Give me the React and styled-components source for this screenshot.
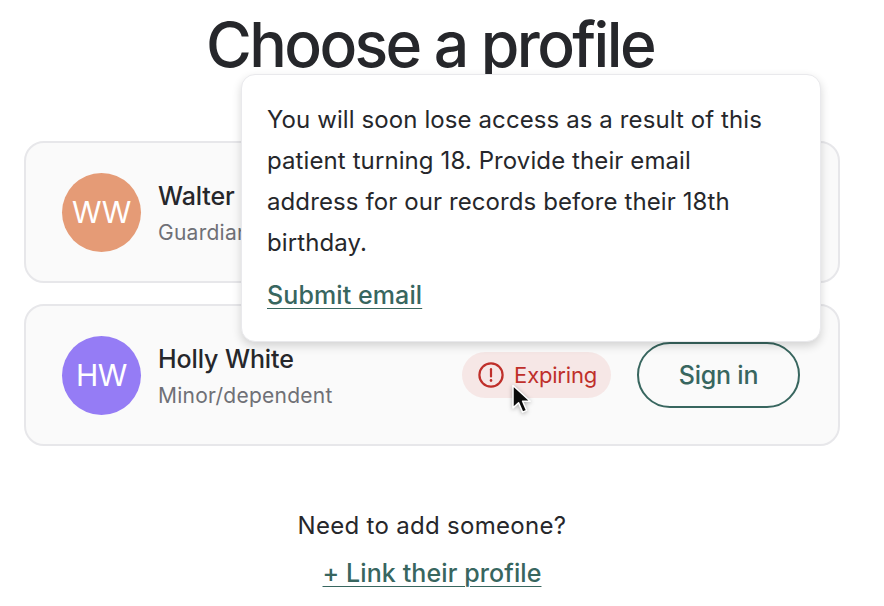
import styled, { createGlobalStyle } from 'styled-components';

const GlobalStyle = createGlobalStyle`
  html, body {
    margin: 0;
    padding: 0;
    background: #fff;
    overflow: hidden;
  }
  body {
    font-family: 'Inter', 'Liberation Sans', sans-serif;
    color: #26272b;
  }
`;

const profiles = [
  { initials: 'WW', name: 'Walter White', role: 'Guardian', color: '#e59b76' },
  { initials: 'HW', name: 'Holly White', role: 'Minor/dependent', color: '#957cf5', expiring: true },
];

function AlertIcon() {
  return (
    <svg width="28" height="28" viewBox="0 0 28 28" fill="none" stroke="#bf2f2a" strokeWidth="2.2" strokeLinecap="round">
      <circle cx="14" cy="14" r="11.6" />
      <path d="M14 8.2v7.2" />
      <path d="M14 19.4v.2" strokeWidth="2.6" />
    </svg>
  );
}

function CursorIcon() {
  return (
    <svg width="22" height="32" viewBox="0 0 22 32">
      <path
        d="M2 1.5v22.4l5.6-5.2 4 9.4 4-1.7-4-9.2h7.6z"
        fill="#0b0b0b"
        stroke="#fff"
        strokeWidth="1.5"
        strokeLinejoin="round"
      />
    </svg>
  );
}

export default function App() {
  return (
    <Page>
      <GlobalStyle />
      <Title>Choose a profile</Title>
      <List>
        {profiles.map((item) => (
          <Card key={item.initials}>
            <Avatar $color={item.color}>{item.initials}</Avatar>
            <Info>
              <Name>{item.name}</Name>
              <Role>{item.role}</Role>
            </Info>
            {item.expiring && (
              <BadgeWrap>
                <Badge>
                  <AlertIcon />
                  Expiring
                </Badge>
                <Cursor>
                  <CursorIcon />
                </Cursor>
              </BadgeWrap>
            )}
            <SignIn>Sign in</SignIn>
          </Card>
        ))}
        <Tooltip>
          <TooltipText>
            You will soon lose access as a result of this patient turning 18. Provide their email
            address for our records before their 18th birthday.
          </TooltipText>
          <TextLink href="#">Submit email</TextLink>
        </Tooltip>
      </List>
      <Footer>
        <FooterText>Need to add someone?</FooterText>
        <TextLink href="#">+ Link their profile</TextLink>
      </Footer>
    </Page>
  );
}

const Page = styled.main`
  width: 816px;
  margin-left: 24px;
  height: 606px;
  overflow: hidden;
`;

const Title = styled.h1`
  margin: 0;
  padding: 8px 4px 0 0;
  height: 141px;
  box-sizing: border-box;
  text-align: center;
  font-size: 62.5px;
  line-height: 72px;
  font-weight: 500;
  letter-spacing: -2.6px;
  color: #26272b;
`;

const List = styled.section`
  position: relative;
  display: flex;
  flex-direction: column;
  gap: 21px;
`;

const Card = styled.article`
  box-sizing: border-box;
  height: 142px;
  display: flex;
  align-items: center;
  padding: 0 38px 0 36px;
  background: #fafafa;
  border: 2px solid #e7e7ea;
  border-radius: 20px;
`;

const Avatar = styled.div`
  width: 79px;
  height: 79px;
  flex: none;
  border-radius: 50%;
  display: flex;
  align-items: center;
  justify-content: center;
  background: ${(props) => props.$color};
  color: #fff;
  font-size: 30px;
  letter-spacing: -0.5px;
`;

const Info = styled.div`
  margin-left: 17px;
  padding-top: 4px;
  flex: 1;
  display: flex;
  flex-direction: column;
  gap: 8px;
`;

const Name = styled.div`
  font-size: 25px;
  line-height: 30px;
  font-weight: 500;
  letter-spacing: -0.1px;
`;

const Role = styled.div`
  font-size: 21px;
  line-height: 28px;
  color: #6f7076;
  letter-spacing: 0.25px;
`;

const BadgeWrap = styled.div`
  position: relative;
  margin-right: 26px;
`;

const Badge = styled.div`
  display: flex;
  align-items: center;
  gap: 9px;
  height: 46px;
  padding: 0 14px 0 15px;
  border-radius: 23px;
  background: #f6e7e6;
  color: #bf2f2a;
  font-size: 22px;
  letter-spacing: -0.2px;
`;

const Cursor = styled.div`
  position: absolute;
  left: 49px;
  top: 32px;
  line-height: 0;
  filter: drop-shadow(0 1px 2px rgba(0, 0, 0, 0.3));
`;

const SignIn = styled.button`
  width: 163px;
  height: 66px;
  border: 2px solid #38665f;
  border-radius: 33px;
  background: transparent;
  color: #38665f;
  font-family: inherit;
  font-size: 25px;
  font-weight: 500;
  letter-spacing: -0.2px;
`;

const Tooltip = styled.div`
  position: absolute;
  left: 217px;
  top: -67px;
  width: 580px;
  height: 268px;
  box-sizing: border-box;
  padding: 24px 25px;
  background: #fff;
  border: 1px solid #e9e9ec;
  border-radius: 14px;
  box-shadow: 0 4px 10px rgba(0, 0, 0, 0.16);
`;

const TooltipText = styled.p`
  margin: 0 0 16px;
  max-width: 515px;
  font-size: 24px;
  line-height: 41px;
  letter-spacing: 0.1px;
  color: #26272b;
`;

const TextLink = styled.a`
  color: #38665f;
  font-size: 25px;
  line-height: 32px;
  font-weight: 500;
  letter-spacing: 0.1px;
  text-decoration: underline;
  text-decoration-thickness: 1px;
  text-underline-offset: 4px;
`;

const Footer = styled.footer`
  margin-top: 64px;
  display: flex;
  flex-direction: column;
  align-items: center;
  gap: 15px;
`;

const FooterText = styled.div`
  font-size: 24px;
  line-height: 32px;
  letter-spacing: 0.3px;
`;
